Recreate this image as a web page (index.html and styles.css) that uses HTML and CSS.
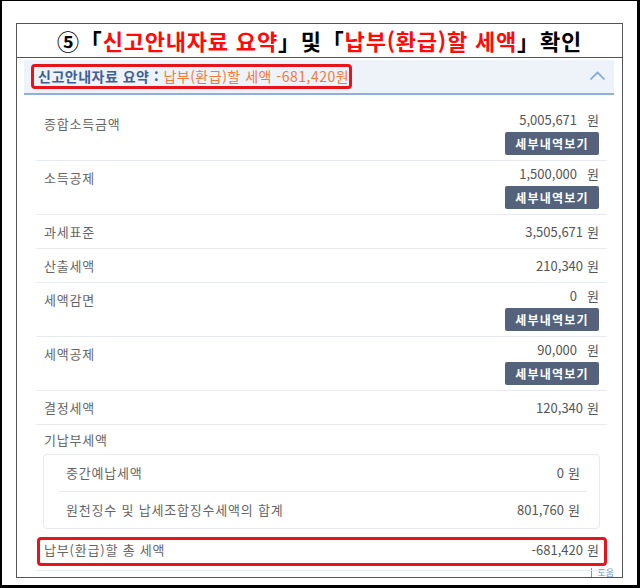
FILE: index.html
```html
<!DOCTYPE html>
<html lang="ko">
<head>
<meta charset="utf-8">
<link rel="stylesheet" href="styles.css">
</head>
<body>
<div class="frame">
  <div class="sheet">
    <div class="title">⑤<span class="br">「</span><span class="red">신고안내자료 요약</span><span class="br">」</span>및<span class="br">「</span><span class="red">납부(환급)할 세액</span><span class="br">」</span>확인</div>
    <div class="panel">
      <div class="panel-head">
        <span class="hl"><span class="head-blue">신고안내자료 요약 :</span> <span class="head-orange">납부(환급)할 세액 -681,420원</span></span>
        <svg class="chev" width="17" height="10" viewBox="0 0 17 10"><polyline points="1.5,8.5 8.5,1.5 15.5,8.5" fill="none" stroke="#7ea6d8" stroke-width="1.7"/></svg>
      </div>
      <div class="body">
        <div class="row btnrow">
          <div class="label">종합소득금액</div>
          <div class="right"><div class="val"><span class="num">5,005,671</span><span class="won wide">원</span></div><div class="btn">세부내역보기</div></div>
        </div>
        <div class="row btnrow">
          <div class="label">소득공제</div>
          <div class="right"><div class="val"><span class="num">1,500,000</span><span class="won wide">원</span></div><div class="btn">세부내역보기</div></div>
        </div>
        <div class="row simple">
          <div class="label">과세표준</div>
          <div class="val"><span class="num">3,505,671</span><span class="won">원</span></div>
        </div>
        <div class="row simple">
          <div class="label">산출세액</div>
          <div class="val"><span class="num">210,340</span><span class="won">원</span></div>
        </div>
        <div class="row btnrow">
          <div class="label">세액감면</div>
          <div class="right"><div class="val"><span class="num">0</span><span class="won wide">원</span></div><div class="btn">세부내역보기</div></div>
        </div>
        <div class="row btnrow">
          <div class="label">세액공제</div>
          <div class="right"><div class="val"><span class="num">90,000</span><span class="won wide">원</span></div><div class="btn">세부내역보기</div></div>
        </div>
        <div class="row simple">
          <div class="label">결정세액</div>
          <div class="val"><span class="num">120,340</span><span class="won">원</span></div>
        </div>
        <div class="row group">
          <div class="label">기납부세액</div>
          <div class="subbox">
            <div class="subrow">
              <div class="label">중간예납세액</div>
              <div class="val"><span class="num">0</span><span class="won">원</span></div>
            </div>
            <div class="subrow">
              <div class="label">원천징수 및 납세조합징수세액의 합계</div>
              <div class="val"><span class="num">801,760</span><span class="won">원</span></div>
            </div>
          </div>
        </div>
        <div class="row total">
          <div class="label">납부(환급)할 총 세액</div>
          <div class="val"><span class="num">-681,420</span><span class="won">원</span></div>
        </div>
      </div>
      <div class="help"><span class="bar"></span>도움</div>
    </div>
  </div>
</div>
</body>
</html>
```

FILE: styles.css
```css
* { box-sizing: border-box; }
html, body { margin: 0; padding: 0; background: #fff; }
body {
  font-family: "Noto Sans CJK KR", "Noto Sans", sans-serif;
  width: 640px;
  height: 588px;
  overflow: hidden;
}
.frame {
  width: 640px;
  height: 588px;
  border-top: 1px solid #000;
  border-left: 2px solid #000;
  border-right: 3px solid #000;
  border-bottom: 3px solid #000;
  padding: 22px 14px 7px 14px;
}
.sheet {
  height: 555px;
  border: 1px solid #555;
  overflow: hidden;
}
.title {
  height: 34px;
  border-bottom: 1px solid #555;
  text-align: center;
  font-size: 22px;
  font-weight: 700;
  line-height: 33px;
  color: #000;
  letter-spacing: 0.8px;
}
.title .red { color: #ff0a0a; }
.panel {
  margin: 2px 8px 0 7px;
}
.panel-head {
  height: 35px;
  background: #eef2f9;
  border-bottom: 2px solid #8fb0dc;
  display: flex;
  align-items: center;
  justify-content: space-between;
  padding: 0 8px 0 14px;
}
.hl {
  position: relative;
  font-size: 14px;
  line-height: 17px;
  letter-spacing: 0.5px;
  white-space: nowrap;
}
.hl::after {
  content: "";
  position: absolute;
  left: -7px;
  right: -3px;
  top: -4px;
  bottom: -4px;
  border: 3px solid #e8141c;
  border-radius: 4px;
}
.head-blue { color: #3f5f96; font-weight: 700; }
.head-orange { color: #f27b3a; }
.chev { display: block; margin-top: -2px; }
.body {
  padding: 12px 7px 0 12px;
}
.row {
  display: flex;
  justify-content: space-between;
  align-items: flex-start;
  border-bottom: 1px solid #e8ebf1;
  padding: 0 8px;
  position: relative;
}
.label {
  font-size: 13px;
  line-height: 16px;
  color: #666;
  letter-spacing: 0.8px;
  white-space: nowrap;
}
.val {
  font-size: 13px;
  line-height: 16px;
  color: #555;
  display: flex;
  align-items: center;
  white-space: nowrap;
}
.won { margin-left: 4px; }
.won.wide { margin-left: 10px; }
.row.simple {
  padding-top: 9px;
  padding-bottom: 8px;
}
.row.btnrow {
  padding-top: 5px;
  padding-bottom: 5px;
}
.row.btnrow .label { margin-top: 4px; }
.right {
  display: flex;
  flex-direction: column;
  align-items: flex-end;
}
.btn {
  margin-top: 4px;
  width: 94px;
  height: 23px;
  background: #55627b;
  color: #fff;
  font-size: 12px;
  font-weight: 700;
  letter-spacing: 1.2px;
  line-height: 23px;
  text-align: center;
  border-radius: 2px;
}
.row.group {
  flex-direction: column;
  align-items: stretch;
  border-bottom: none;
  padding-top: 7px;
  padding-bottom: 4px;
}
.subbox {
  margin: 6px -1px 0 -1px;
  height: 75px;
  border: 1px solid #e6e9ef;
  border-radius: 4px;
  padding: 0 12px 0 14px;
}
.subrow {
  display: flex;
  justify-content: space-between;
  padding: 10px 7px 10px 8px;
  border-bottom: 1px solid #e8ebf1;
}
.subrow:last-child { border-bottom: none; }
.row.total {
  padding-top: 9px;
  padding-bottom: 12px;
}
.row.total::after {
  content: "";
  position: absolute;
  left: 1px;
  right: 0;
  top: 4px;
  bottom: 4px;
  border: 3px solid #e8141c;
  border-radius: 4px;
}
.help {
  display: flex;
  justify-content: flex-end;
  align-items: center;
  margin-top: -3px;
  padding-right: 0;
  font-size: 9px;
  line-height: 10px;
  color: #6f93c6;
}
.help .bar {
  display: inline-block;
  width: 1px;
  height: 10px;
  background: #6f93c6;
  margin-right: 5px;
}
```
